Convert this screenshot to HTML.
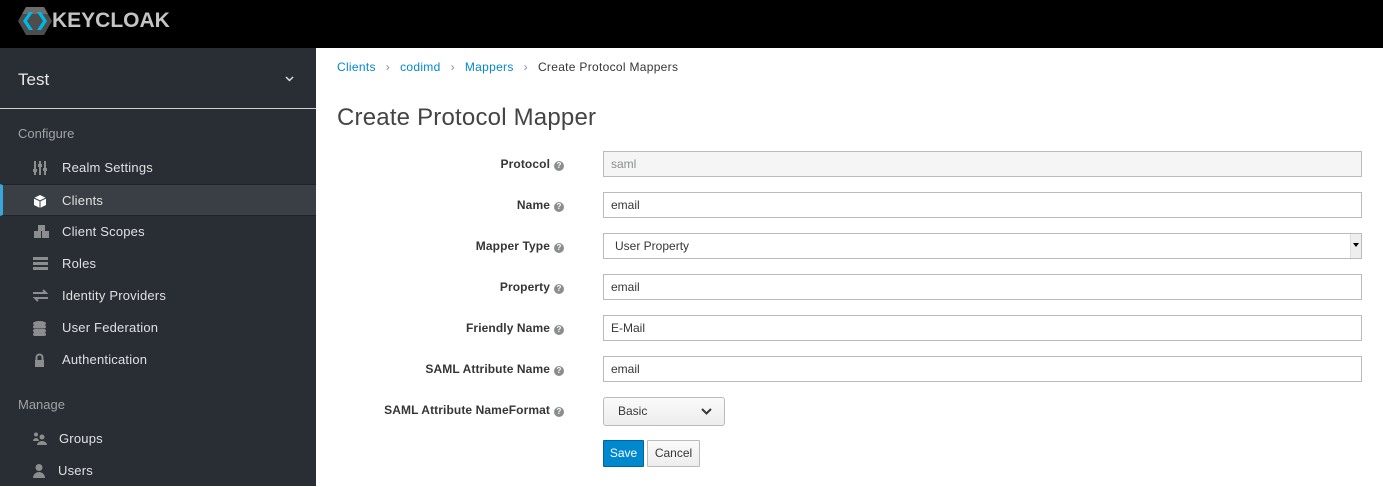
<!DOCTYPE html>
<html><head><style>
*{box-sizing:border-box;margin:0;padding:0}
body{width:1383px;height:486px;overflow:hidden;font-family:"Liberation Sans",sans-serif;font-size:12px;color:#363636;background:#fff;position:relative}
.hdr{position:absolute;left:0;top:0;width:1383px;height:48px;background:#000}
.side{position:absolute;left:0;top:48px;width:316px;height:438px;background:#292e34;color:#fff}
.realm{height:61px;border-bottom:1px solid #cfcfcf;font-size:17px;padding:22px 18px;position:relative;color:#e8e8e8}
.sec{color:#a0a3a6;font-size:13px;position:absolute;left:18px}
.item{position:absolute;left:0;width:316px;height:32px;font-size:13px;color:#e0e0e0;padding-left:62px;line-height:32px;letter-spacing:0.2px}
.item svg{position:absolute;left:33px;top:9px}
.item.act{background:#393f44;border-left:3px solid #39a5dc;border-top:1px solid #1f2226;border-bottom:1px solid #1f2226}
.bc{position:absolute;left:337px;top:60px;font-size:12px;color:#363636;letter-spacing:0.3px}
.bc a{color:#0088ce}
.bc i{color:#8b8d8f;font-style:normal;margin:0 10px}
h1{position:absolute;left:337px;top:104px;font-weight:normal;font-size:24px;color:#444;letter-spacing:0.2px}
.lbl{position:absolute;right:819px;font-weight:bold;font-size:12px;height:26px;line-height:26px;white-space:nowrap;color:#363636;letter-spacing:0.1px}
.q{display:inline-block;width:10px;height:10px;border-radius:50%;background:#8b8d8f;color:#fff;font-size:8px;line-height:10px;text-align:center;margin-left:4px;vertical-align:0px}
.inp{position:absolute;left:603px;width:759px;height:26px;border:1px solid #bbb;padding-left:7px;line-height:24px;font-size:12px;color:#363636;background:#fff}
.btn{position:absolute;height:27px;border:1px solid #bbb;border-radius:1px;font-size:12px;line-height:25px;text-align:center}
</style></head><body>
<div class="hdr">
<svg style="position:absolute;left:18px;top:6px" width="34" height="30" viewBox="0 0 34 30"><polygon points="8,1 26,1 34,15 26,29 8,29 0,15" fill="#4d4d4d"/><polygon points="8,1 26,1 30,8 4,8" fill="#6d6d6d"/><polygon points="5,15 11,6 15,6 9,15 15,24 11,24" fill="#00b8e3"/><polygon points="29,15 23,6 19,6 25,15 19,24 23,24" fill="#00b8e3"/></svg>
<span style="position:absolute;left:52px;top:9px;color:#c4c4c4;font-weight:bold;font-size:21px">KEYCLOAK</span>
</div>
<div class="side">
<div class="realm">Test<svg style="position:absolute;right:22px;top:28px" width="9" height="6" viewBox="0 0 9 6"><path d="M1 1l3.5 3.5L8 1" stroke="#ddd" stroke-width="1.5" fill="none"/></svg></div>
<div class="sec" style="top:78px">Configure</div>
<div class="item" style="top:104px"><svg width="14" height="14" viewBox="0 0 14 14" fill="#8b8d8f"><rect x="1" y="0" width="2" height="14"/><rect x="6" y="0" width="2" height="14"/><rect x="11" y="0" width="2" height="14"/><rect x="0" y="8" width="4" height="3"/><rect x="5" y="3" width="4" height="3"/><rect x="10" y="7" width="4" height="3"/></svg>Realm Settings</div>
<div class="item act" style="top:136px;padding-left:59px"><svg style="left:30px" width="14" height="14" viewBox="0 0 14 14"><polygon points="7,1 13,4 13,11 7,14 1,11 1,4" fill="#fff"/><path d="M1 4l6 3 6-3M7 7v7" stroke="#393f44" stroke-width="1" fill="none"/></svg>Clients</div>
<div class="item" style="top:168px"><svg width="18" height="14" viewBox="0 0 18 14" fill="#8b8d8f"><rect x="5" y="0" width="7" height="6"/><rect x="1" y="6" width="7" height="7"/><rect x="9" y="6" width="7" height="7"/></svg>Client Scopes</div>
<div class="item" style="top:200px"><svg width="15" height="13" viewBox="0 0 15 13" fill="#8b8d8f"><rect x="0" y="0" width="15" height="3"/><rect x="0" y="5" width="15" height="3"/><rect x="0" y="10" width="15" height="3"/></svg>Roles</div>
<div class="item" style="top:232px"><svg width="15" height="13" viewBox="0 0 15 13" fill="#8b8d8f"><path d="M0 4h13l-3-3M15 9H2l3 3" stroke="#8b8d8f" stroke-width="2" fill="none"/></svg>Identity Providers</div>
<div class="item" style="top:264px"><svg width="13" height="15" viewBox="0 0 13 15" fill="#8b8d8f"><ellipse cx="6.5" cy="2.5" rx="6.5" ry="2.5"/><rect x="0" y="4" width="13" height="3.5" rx="2"/><rect x="0" y="8" width="13" height="3.5" rx="2"/><rect x="0" y="11.5" width="13" height="3.5" rx="2"/></svg>User Federation</div>
<div class="item" style="top:296px"><svg width="13" height="14" viewBox="0 0 13 14"><path d="M3.5 7V4.5a3 3 0 016 0V7" stroke="#8b8d8f" stroke-width="2" fill="none"/><rect x="2" y="7" width="9" height="7" fill="#8b8d8f"/></svg>Authentication</div>
<div class="sec" style="top:349px">Manage</div>
<div class="item" style="top:375px;padding-left:59px"><svg width="14" height="13" viewBox="0 0 14 13" fill="#8b8d8f"><circle cx="3" cy="2.5" r="2"/><circle cx="9" cy="5" r="2.5"/><path d="M0 9a3 3 0 016 0zM4 13a5 4 0 0110 0z"/></svg>Groups</div>
<div class="item" style="top:407px;padding-left:58px"><svg width="12" height="14" viewBox="0 0 12 14" fill="#8b8d8f"><circle cx="6" cy="3.5" r="3.5"/><path d="M0 14a6 6 0 0112 0z"/></svg>Users</div>
</div>
<div class="bc"><a>Clients</a><i>›</i><a>codimd</a><i>›</i><a>Mappers</a><i>›</i>Create Protocol Mappers</div>
<h1>Create Protocol Mapper</h1>
<div class="lbl" style="top:151px">Protocol<span class="q">?</span></div>
<div class="inp" style="top:151px;background:#f5f5f5;color:#8b8d8f">saml</div>
<div class="lbl" style="top:192px">Name<span class="q">?</span></div>
<div class="inp" style="top:192px">email</div>
<div class="lbl" style="top:233px">Mapper Type<span class="q">?</span></div>
<div class="inp" style="top:233px;padding-left:11px">User Property<span style="position:absolute;right:0;top:0;width:11px;height:24px;background:#eee;border-left:1px solid #ddd"></span><span style="position:absolute;right:2px;top:9px;width:0;height:0;border-left:3px solid transparent;border-right:3px solid transparent;border-top:4px solid #000"></span></div>
<div class="lbl" style="top:274px">Property<span class="q">?</span></div>
<div class="inp" style="top:274px">email</div>
<div class="lbl" style="top:315px">Friendly Name<span class="q">?</span></div>
<div class="inp" style="top:315px">E-Mail</div>
<div class="lbl" style="top:356px">SAML Attribute Name<span class="q">?</span></div>
<div class="inp" style="top:356px">email</div>
<div class="lbl" style="top:397px">SAML Attribute NameFormat<span class="q">?</span></div>
<div class="btn" style="left:603px;top:397px;width:122px;height:29px;line-height:27px;text-align:left;padding-left:14px;background:linear-gradient(#fafafa,#ededed);border-radius:3px">Basic<svg style="position:absolute;right:12px;top:10px" width="11" height="7" viewBox="0 0 11 7"><path d="M1 1l4.5 4.5L10 1" stroke="#363636" stroke-width="2" fill="none"/></svg></div>
<div class="btn" style="left:603px;top:440px;width:41px;background:#0088ce;border-color:#00659c;color:#fff">Save</div>
<div class="btn" style="left:647px;top:440px;width:53px;background:linear-gradient(#fafafa,#ededed)">Cancel</div>
</body></html>
